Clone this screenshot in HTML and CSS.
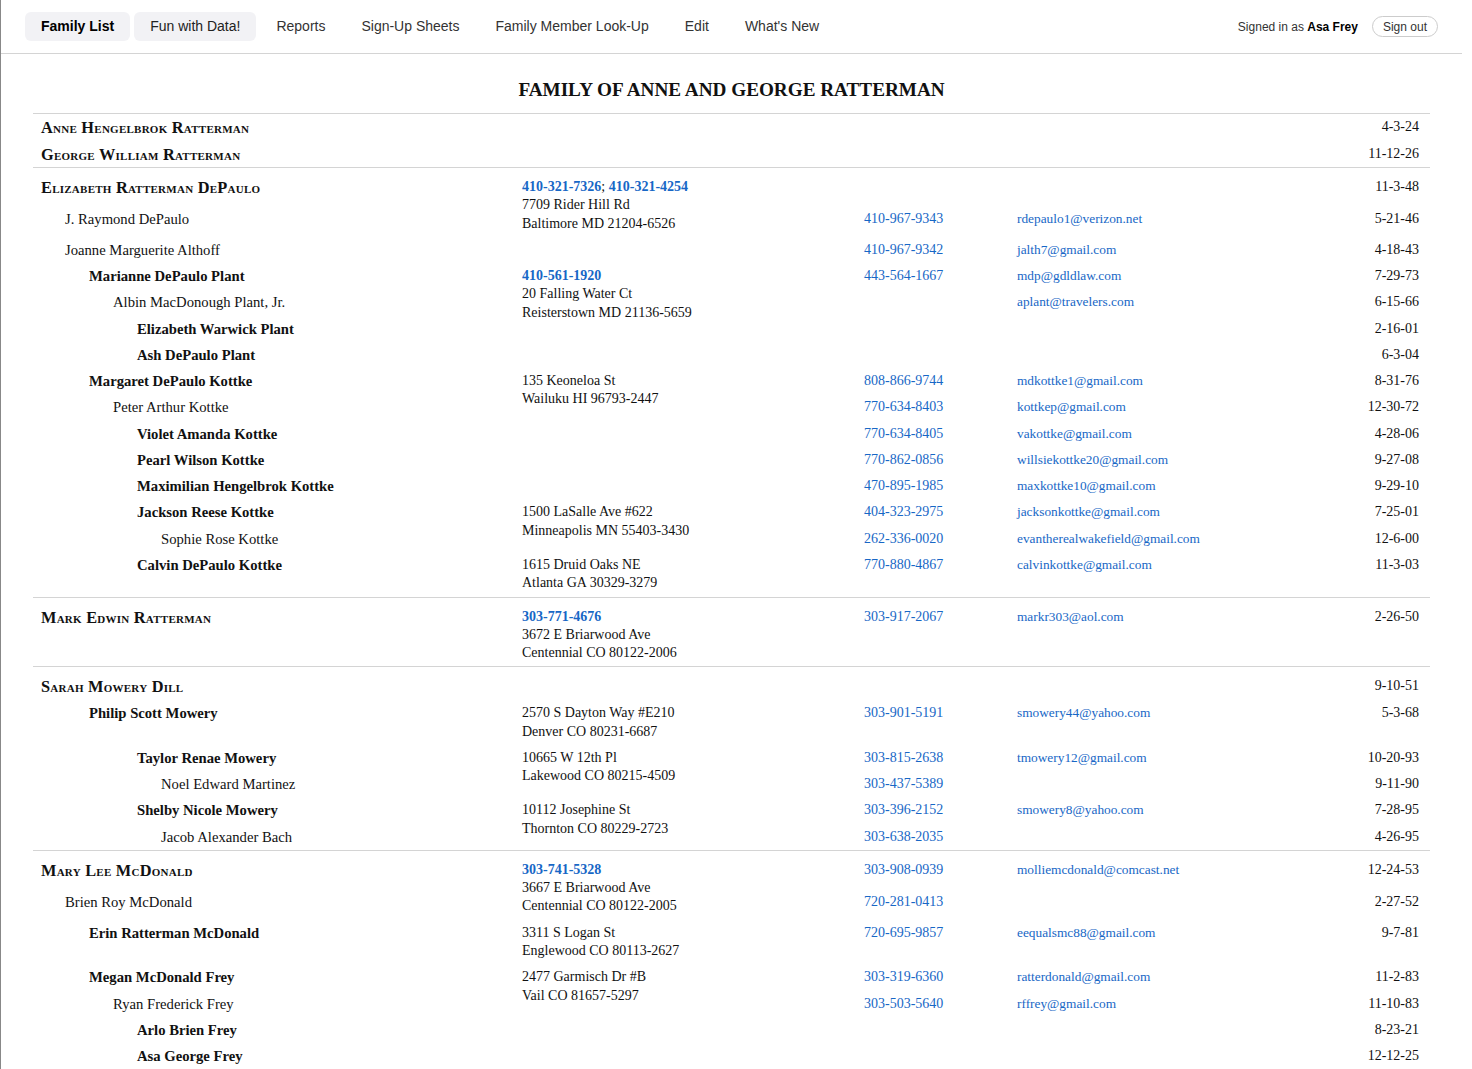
FILE: index.html
```html
<!DOCTYPE html>
<html lang="en">
<head>
  <meta charset="UTF-8" />
  <meta name="viewport" content="width=device-width, initial-scale=1.0" />
  <title>Family List</title>
  <link rel="stylesheet" href="styles.css">
</head>
<body>
  <header class="topbar">
    <nav class="tabs">
      <a class="tab active" href="#">Family List</a>
      <a class="tab soft" href="#">Fun with Data!</a>
      <a class="tab" href="#">Reports</a>
      <a class="tab" href="#">Sign-Up Sheets</a>
      <a class="tab" href="#">Family Member Look-Up</a>
      <a class="tab" href="#">Edit</a>
      <a class="tab" href="#">What's New</a>
    </nav>
    <div class="account">
      <span>Signed in as <b>Asa Frey</b></span>
      <button class="signout">Sign out</button>
    </div>
  </header>

  <main class="page">
    <h1 class="page-title">FAMILY OF ANNE AND GEORGE RATTERMAN</h1>

    <table class="family-list">
      <colgroup>
        <col class="c-name">
        <col class="c-addr">
        <col class="c-phone">
        <col>
        <col class="c-date">
      </colgroup>

      <tbody class="parents">
        <tr>
          <td class="name head">Anne Hengelbrok Ratterman</td>
          <td></td><td></td><td></td>
          <td class="date">4-3-24</td>
        </tr>
        <tr>
          <td class="name head">George William Ratterman</td>
          <td></td><td></td><td></td>
          <td class="date">11-12-26</td>
        </tr>
      </tbody>

      <tbody class="family">
        <tr>
          <td class="name head">Elizabeth Ratterman DePaulo</td>
          <td class="addr" rowspan="2"><a class="main-phone" href="#">410-321-7326</a>; <a class="main-phone" href="#">410-321-4254</a><br>7709 Rider Hill Rd<br>Baltimore MD 21204-6526</td>
          <td></td><td></td>
          <td class="date">11-3-48</td>
        </tr>
        <tr>
          <td class="name lvl-1">J. Raymond DePaulo</td>
          <td class="phone"><a href="#">410-967-9343</a></td>
          <td class="email"><a href="#">rdepaulo1@verizon.net</a></td>
          <td class="date">5-21-46</td>
        </tr>
        <tr>
          <td class="name lvl-1">Joanne Marguerite Althoff</td>
          <td></td>
          <td class="phone"><a href="#">410-967-9342</a></td>
          <td class="email"><a href="#">jalth7@gmail.com</a></td>
          <td class="date">4-18-43</td>
        </tr>
        <tr>
          <td class="name lvl-2 blood">Marianne DePaulo Plant</td>
          <td class="addr" rowspan="4"><a class="main-phone" href="#">410-561-1920</a><br>20 Falling Water Ct<br>Reisterstown MD 21136-5659</td>
          <td class="phone"><a href="#">443-564-1667</a></td>
          <td class="email"><a href="#">mdp@gdldlaw.com</a></td>
          <td class="date">7-29-73</td>
        </tr>
        <tr>
          <td class="name lvl-3">Albin MacDonough Plant, Jr.</td>
          <td></td>
          <td class="email"><a href="#">aplant@travelers.com</a></td>
          <td class="date">6-15-66</td>
        </tr>
        <tr>
          <td class="name lvl-4 blood">Elizabeth Warwick Plant</td>
          <td></td><td></td>
          <td class="date">2-16-01</td>
        </tr>
        <tr>
          <td class="name lvl-4 blood">Ash DePaulo Plant</td>
          <td></td><td></td>
          <td class="date">6-3-04</td>
        </tr>
        <tr>
          <td class="name lvl-2 blood">Margaret DePaulo Kottke</td>
          <td class="addr" rowspan="5">135 Keoneloa St<br>Wailuku HI 96793-2447</td>
          <td class="phone"><a href="#">808-866-9744</a></td>
          <td class="email"><a href="#">mdkottke1@gmail.com</a></td>
          <td class="date">8-31-76</td>
        </tr>
        <tr>
          <td class="name lvl-3">Peter Arthur Kottke</td>
          <td class="phone"><a href="#">770-634-8403</a></td>
          <td class="email"><a href="#">kottkep@gmail.com</a></td>
          <td class="date">12-30-72</td>
        </tr>
        <tr>
          <td class="name lvl-4 blood">Violet Amanda Kottke</td>
          <td class="phone"><a href="#">770-634-8405</a></td>
          <td class="email"><a href="#">vakottke@gmail.com</a></td>
          <td class="date">4-28-06</td>
        </tr>
        <tr>
          <td class="name lvl-4 blood">Pearl Wilson Kottke</td>
          <td class="phone"><a href="#">770-862-0856</a></td>
          <td class="email"><a href="#">willsiekottke20@gmail.com</a></td>
          <td class="date">9-27-08</td>
        </tr>
        <tr>
          <td class="name lvl-4 blood">Maximilian Hengelbrok Kottke</td>
          <td class="phone"><a href="#">470-895-1985</a></td>
          <td class="email"><a href="#">maxkottke10@gmail.com</a></td>
          <td class="date">9-29-10</td>
        </tr>
        <tr>
          <td class="name lvl-4 blood">Jackson Reese Kottke</td>
          <td class="addr" rowspan="2">1500 LaSalle Ave #622<br>Minneapolis MN 55403-3430</td>
          <td class="phone"><a href="#">404-323-2975</a></td>
          <td class="email"><a href="#">jacksonkottke@gmail.com</a></td>
          <td class="date">7-25-01</td>
        </tr>
        <tr>
          <td class="name lvl-5">Sophie Rose Kottke</td>
          <td class="phone"><a href="#">262-336-0020</a></td>
          <td class="email"><a href="#">evantherealwakefield@gmail.com</a></td>
          <td class="date">12-6-00</td>
        </tr>
        <tr>
          <td class="name lvl-4 blood">Calvin DePaulo Kottke</td>
          <td class="addr">1615 Druid Oaks NE<br>Atlanta GA 30329-3279</td>
          <td class="phone"><a href="#">770-880-4867</a></td>
          <td class="email"><a href="#">calvinkottke@gmail.com</a></td>
          <td class="date">11-3-03</td>
        </tr>
      </tbody>

      <tbody class="family">
        <tr>
          <td class="name head">Mark Edwin Ratterman</td>
          <td class="addr"><a class="main-phone" href="#">303-771-4676</a><br>3672 E Briarwood Ave<br>Centennial CO 80122-2006</td>
          <td class="phone"><a href="#">303-917-2067</a></td>
          <td class="email"><a href="#">markr303@aol.com</a></td>
          <td class="date">2-26-50</td>
        </tr>
      </tbody>

      <tbody class="family">
        <tr>
          <td class="name head">Sarah Mowery Dill</td>
          <td></td><td></td><td></td>
          <td class="date">9-10-51</td>
        </tr>
        <tr>
          <td class="name lvl-2 blood">Philip Scott Mowery</td>
          <td class="addr">2570 S Dayton Way #E210<br>Denver CO 80231-6687</td>
          <td class="phone"><a href="#">303-901-5191</a></td>
          <td class="email"><a href="#">smowery44@yahoo.com</a></td>
          <td class="date">5-3-68</td>
        </tr>
        <tr>
          <td class="name lvl-4 blood">Taylor Renae Mowery</td>
          <td class="addr" rowspan="2">10665 W 12th Pl<br>Lakewood CO 80215-4509</td>
          <td class="phone"><a href="#">303-815-2638</a></td>
          <td class="email"><a href="#">tmowery12@gmail.com</a></td>
          <td class="date">10-20-93</td>
        </tr>
        <tr>
          <td class="name lvl-5">Noel Edward Martinez</td>
          <td class="phone"><a href="#">303-437-5389</a></td>
          <td></td>
          <td class="date">9-11-90</td>
        </tr>
        <tr>
          <td class="name lvl-4 blood">Shelby Nicole Mowery</td>
          <td class="addr" rowspan="2">10112 Josephine St<br>Thornton CO 80229-2723</td>
          <td class="phone"><a href="#">303-396-2152</a></td>
          <td class="email"><a href="#">smowery8@yahoo.com</a></td>
          <td class="date">7-28-95</td>
        </tr>
        <tr>
          <td class="name lvl-5">Jacob Alexander Bach</td>
          <td class="phone"><a href="#">303-638-2035</a></td>
          <td></td>
          <td class="date">4-26-95</td>
        </tr>
      </tbody>

      <tbody class="family">
        <tr>
          <td class="name head">Mary Lee McDonald</td>
          <td class="addr" rowspan="2"><a class="main-phone" href="#">303-741-5328</a><br>3667 E Briarwood Ave<br>Centennial CO 80122-2005</td>
          <td class="phone"><a href="#">303-908-0939</a></td>
          <td class="email"><a href="#">molliemcdonald@comcast.net</a></td>
          <td class="date">12-24-53</td>
        </tr>
        <tr>
          <td class="name lvl-1">Brien Roy McDonald</td>
          <td class="phone"><a href="#">720-281-0413</a></td>
          <td></td>
          <td class="date">2-27-52</td>
        </tr>
        <tr>
          <td class="name lvl-2 blood">Erin Ratterman McDonald</td>
          <td class="addr">3311 S Logan St<br>Englewood CO 80113-2627</td>
          <td class="phone"><a href="#">720-695-9857</a></td>
          <td class="email"><a href="#">eequalsmc88@gmail.com</a></td>
          <td class="date">9-7-81</td>
        </tr>
        <tr>
          <td class="name lvl-2 blood">Megan McDonald Frey</td>
          <td class="addr" rowspan="4">2477 Garmisch Dr #B<br>Vail CO 81657-5297</td>
          <td class="phone"><a href="#">303-319-6360</a></td>
          <td class="email"><a href="#">ratterdonald@gmail.com</a></td>
          <td class="date">11-2-83</td>
        </tr>
        <tr>
          <td class="name lvl-3">Ryan Frederick Frey</td>
          <td class="phone"><a href="#">303-503-5640</a></td>
          <td class="email"><a href="#">rffrey@gmail.com</a></td>
          <td class="date">11-10-83</td>
        </tr>
        <tr>
          <td class="name lvl-4 blood">Arlo Brien Frey</td>
          <td></td><td></td>
          <td class="date">8-23-21</td>
        </tr>
        <tr>
          <td class="name lvl-4 blood">Asa George Frey</td>
          <td></td><td></td>
          <td class="date">12-12-25</td>
        </tr>
      </tbody>
    </table>
  </main>
</body>
</html>
```

FILE: styles.css
```css
html {
  overflow-y: scroll;
}
body {
  margin: 0 10px 0 0;
  border-left: 1px solid #888;
  font-family: "Liberation Sans", Arial, sans-serif;
  color: #111;
  background: #fff;
}
a {
  text-decoration: none;
}

/* top navigation */
.topbar {
  display: flex;
  justify-content: space-between;
  align-items: center;
  padding: 12px 24px 12px 24px;
  border-bottom: 1px solid #d4d4d4;
}
.tabs {
  display: flex;
  gap: 4px;
}
.tab {
  display: block;
  padding: 0 16px;
  height: 29px;
  line-height: 29px;
  font-size: 14px;
  color: #333;
  border-radius: 6px;
}
.tab.active {
  background: #f2f2f5;
  color: #000;
  font-weight: bold;
}
.tab.soft {
  background: #f2f2f5;
  color: #222;
}
.account {
  display: flex;
  align-items: center;
  gap: 14px;
  font-size: 12px;
  color: #333;
}
.account b {
  color: #000;
}
.signout {
  font-family: inherit;
  font-size: 12px;
  color: #333;
  background: #fff;
  border: 1px solid #ccc;
  border-radius: 999px;
  padding: 3px 10px;
  height: 21px;
  cursor: pointer;
}

/* family list */
.page {
  padding: 0 32px;
  min-height: 2035px;
  font-family: "Liberation Serif", "Times New Roman", serif;
}
.page-title {
  font-size: 19.2px;
  text-align: center;
  margin: 25px 0 12px 0;
  line-height: 22px;
}
.family-list {
  width: 100%;
  table-layout: fixed;
  border-collapse: collapse;
}
.c-name { width: 481px; }
.c-addr { width: 342px; }
.c-phone { width: 153px; }
.c-date { width: 100px; }
.family-list tbody {
  border-top: 1px solid #d4d4d4;
}
.family-list td {
  padding: 4px 8px;
  vertical-align: top;
  line-height: 18.27px;
  font-size: 14px;
  white-space: nowrap;
}
.family-list tbody.parents tr:first-child td {
  padding-top: 4px;
}
.family-list tbody.parents tr:last-child td {
  padding-bottom: 3px;
}
.family-list tbody.family tr:first-child td {
  padding-top: 10px;
}
.family-list a {
  color: #1767c6;
}
td.name {
  font-size: 14.67px;
}
td.head {
  font-size: 16.33px;
  line-height: 19px;
  letter-spacing: 0.25px;
  font-weight: bold;
  font-variant: small-caps;
}
td.blood {
  font-weight: bold;
}
td.lvl-1 { padding-left: 32px; }
td.lvl-2 { padding-left: 56px; }
td.lvl-3 { padding-left: 80px; }
td.lvl-4 { padding-left: 104px; }
td.lvl-5 { padding-left: 128px; }
.main-phone {
  font-weight: bold;
}
td.email {
  font-size: 13.33px;
}
td.date {
  text-align: right;
  padding-right: 11px;
}
```
